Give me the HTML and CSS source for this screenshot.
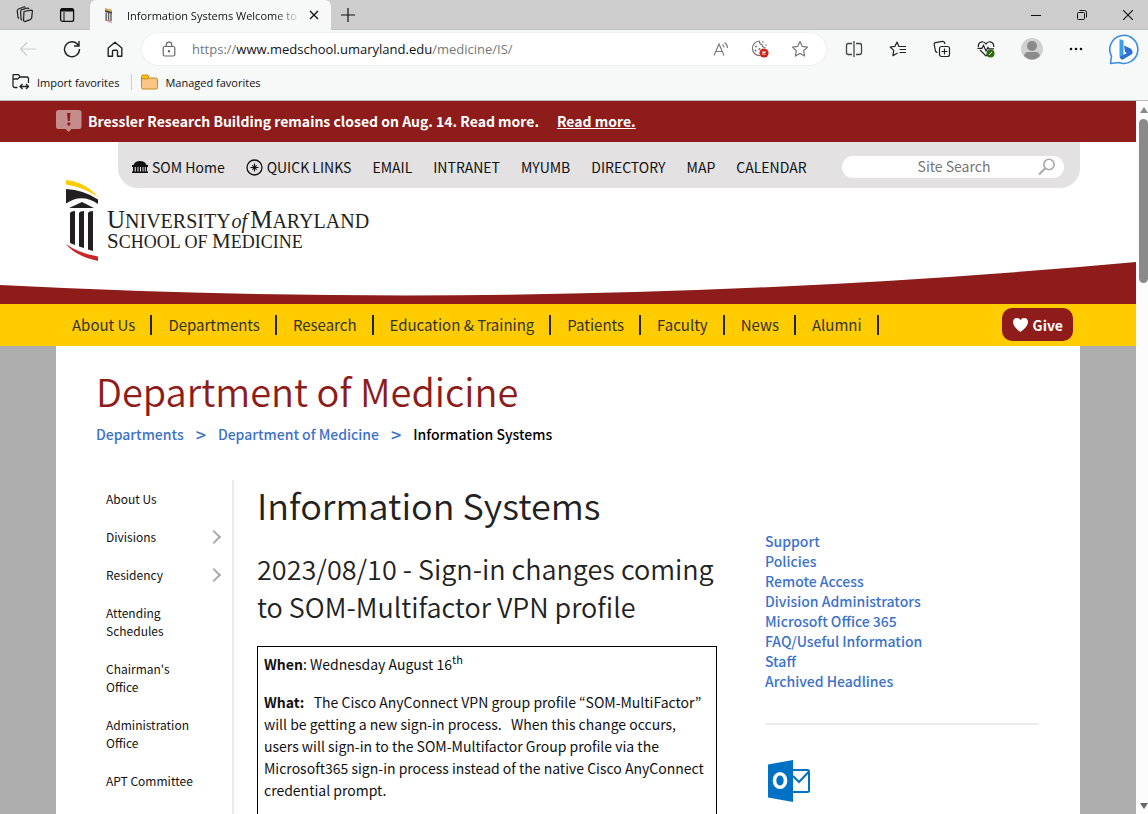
FILE: index.html
```
<!DOCTYPE html>
<html lang="en">
<head>
    <meta charset="UTF-8">
    <meta name="viewport" content="width=device-width, initial-scale=1.0">
    <title>Information Systems Welcome to the Department of Medicine</title>
    <link rel="stylesheet" href="styles.css">
</head>
<body>
    <!-- Browser window -->
    <div class="browser">
        <div class="tab-strip">
            <div class="tab-tools">
                <button class="icon-btn" aria-label="Workspaces">
                    <svg width="18" height="18" viewBox="0 0 18 18" fill="none" stroke="#222" stroke-width="1.2" stroke-linejoin="round"><path d="M8 5.5l7.2-1.3q1.3 0 1.2 1.2l-.8 7-1.3 1.2-5.6 2-1.2-1z"/><path d="M13 3.2L12 2 5.6 3.6 4.6 5l.5 8.4 1 1"/><path d="M9.6 1.5L8.4.8 2.4 3 1.2 4.5l.8 7 1.2 1"/></svg>
                </button>
                <button class="icon-btn" aria-label="Tab actions">
                    <svg width="16" height="16" viewBox="0 0 16 16" fill="none" stroke="#111" stroke-width="1.3"><rect x="1.6" y="1.6" width="13" height="12.8" rx="2"/><path d="M2 3.6h12M2 2.6h12" stroke-width="2"/><path d="M5 5v9" stroke-width="1"/></svg>
                </button>
            </div>
            <div class="tab">
                <svg class="favicon" width="10" height="16" viewBox="0 0 10 16"><path d="M1 1l7 2v2L1 3z" fill="#e0a23c"/><path d="M1 3l7 2v2L1 5z" fill="#444"/><path d="M2.2 6v7M4.6 6v8M7 7v7" stroke="#666" stroke-width="1.5"/><path d="M1 13l7 2.4" stroke="#c77" stroke-width="1"/></svg>
                <span class="tab-title">Information Systems Welcome to</span>
                <button class="icon-btn" aria-label="Close tab">
                    <svg width="10" height="10" viewBox="0 0 10 10" stroke="#111" stroke-width="1.3"><path d="M1 1l8 8M9 1l-8 8"/></svg>
                </button>
            </div>
            <button class="icon-btn new-tab" aria-label="New tab">
                <svg width="14" height="14" viewBox="0 0 14 14" stroke="#111" stroke-width="1.2"><path d="M7 0v14M0 7h14"/></svg>
            </button>
            <div class="window-buttons">
                <button class="icon-btn" aria-label="Minimize"><svg width="10" height="10" viewBox="0 0 10 10" stroke="#111"><path d="M0 5.5h10"/></svg></button>
                <button class="icon-btn" aria-label="Restore"><svg width="10" height="10" viewBox="0 0 10 10" fill="none" stroke="#111"><rect x=".5" y="2.5" width="7" height="7" rx="1"/><path d="M2.5.5h5q2 0 2 2v5"/></svg></button>
                <button class="icon-btn" aria-label="Close"><svg width="10" height="10" viewBox="0 0 10 10" stroke="#111" stroke-width="1.1"><path d="M0 0l10 10M10 0L0 10"/></svg></button>
            </div>
        </div>

        <div class="toolbar">
            <div class="nav-buttons">
                <button class="icon-btn" aria-label="Back"><svg width="18" height="16" viewBox="0 0 18 16" fill="none" stroke="#ccc" stroke-width="1.2"><path d="M17 8H2M8 1.500L1.500 8 8 14.500"/></svg></button>
                <button class="icon-btn" aria-label="Refresh"><svg width="18" height="18" viewBox="0 0 18 18" fill="none" stroke="#222" stroke-width="1.4"><path d="M15.500 5.500A7.500 7.500 0 1 0 16.500 9M16 1v5h-5"/></svg></button>
                <button class="icon-btn" aria-label="Home"><svg width="16" height="17" viewBox="0 0 16 17" fill="none" stroke="#222" stroke-width="1.4" stroke-linejoin="round"><path d="M1.200 7L8 1.200 14.800 7v8.300h-4.300v-5q0-1-1-1h-3q-1 0-1 1v5H1.200z"/></svg></button>
            </div>
            <div class="address">
                <svg width="14" height="16" viewBox="0 0 14 16" fill="none" stroke="#666" stroke-width="1.2"><rect x="1.200" y="5.500" width="11.600" height="9.500" rx="1.500"/><path d="M4.200 5.500V4a2.800 2.800 0 0 1 5.600 0v1.500"/><circle cx="7" cy="10.300" r=".6" fill="#444"/></svg>
                <span class="url">https://<b>www.medschool.umaryland.edu</b>/medicine/IS/</span>
                <button class="icon-btn" aria-label="Read aloud"><svg width="16" height="16" viewBox="0 0 16 16" fill="none" stroke="#777" stroke-width="1.100"><path d="M1 14.500L6 3l5 11.500M2.800 10.500h6.400M9.500 3.500q1.500 1.200 1.500 3M11.500 1.500q3 2 3 5.500"/></svg></button>
                <button class="icon-btn" aria-label="Cookies blocked"><svg width="18" height="18" viewBox="0 0 18 18" fill="none" stroke="#777" stroke-width="1.200"><path d="M8.500 1A7.300 7.300 0 1 0 9 15.700M8.500 1q-.5 3 2.500 3.500 0 3 3.500 3"/><g fill="#777" stroke="none"><circle cx="5" cy="6.500" r="1"/><circle cx="4.500" cy="10.500" r="1"/><circle cx="8.500" cy="9" r="1"/><circle cx="12" cy="2" r=".8"/><circle cx="15" cy="5" r=".8"/></g><circle cx="13" cy="13" r="4.600" fill="#d0221b" stroke="none"/><path d="M11.500 11.500l3 3M14.500 11.500l-3 3" stroke="#fff"/></svg></button>
                <button class="icon-btn" aria-label="Add to favorites"><svg width="18" height="18" viewBox="0 0 18 18" fill="none" stroke="#777" stroke-width="1.200" stroke-linejoin="round"><path d="M9 1.500l2.300 4.900 5.200.7-3.800 3.700.9 5.300L9 13.500l-4.600 2.600.9-5.300-3.800-3.700 5.200-.7z"/></svg></button>
            </div>
            <div class="toolbar-actions">
                <button class="icon-btn" aria-label="Split screen"><svg width="18" height="16" viewBox="0 0 18 16" fill="none" stroke="#444" stroke-width="1.300"><path d="M7 2.500H3.500q-2 0-2 2v7q0 2 2 2H7M11 2.500h3.500q2 0 2 2v7q0 2-2 2H11M9 0v16"/></svg></button>
                <button class="icon-btn" aria-label="Favorites"><svg width="18" height="16" viewBox="0 0 18 16" fill="none" stroke="#222" stroke-width="1.200" stroke-linejoin="round"><path d="M12 5.500l-2.200-.2L8 1 6 5.300l-4.900.7 3.700 3.400-.9 5.300L8.500 12M11 5.500h6M10.500 8.500H17M10.500 11.500H17"/></svg></button>
                <button class="icon-btn" aria-label="Collections"><svg width="18" height="18" viewBox="0 0 18 18" fill="none" stroke="#222" stroke-width="1.200"><rect x="6.500" y="6.500" width="10" height="10" rx="2"/><path d="M11.500 8.500v6M8.500 11.500h6M4.500 12.500q-1.500 0-2-1.500L1.200 4.500Q1 3 2.500 2.700L9.500 1.300q1.500-.2 2 1.200l.4 1.700"/></svg></button>
                <button class="icon-btn" aria-label="Browser essentials"><svg width="18" height="18" viewBox="0 0 18 18" fill="none" stroke="#222" stroke-width="1.200"><path d="M1.300 7Q.8 2.800 4.800 1.800 7.500 1.500 9 4q1.500-2.500 4.200-2.200 4 1 3.500 5.200M3 10l6 6 2-2M.5 8.300H5l1.500-3L9 11l2-3.500.8 1.300H17"/><circle cx="13.500" cy="13.500" r="4" fill="#2c6b12" stroke="none"/><path d="M12 15l3-3" stroke="#fff" stroke-width="1"/></svg></button>
                <button class="icon-btn" aria-label="Profile"><svg width="22" height="22" viewBox="0 0 22 22"><circle cx="11" cy="11" r="11" fill="#d0d0d0"/><circle cx="11" cy="8" r="5" fill="#8a8a8a"/><path d="M3 18q1-4 4-4h8q3 0 4 4-8 7-16 0z" fill="#8a8a8a"/></svg></button>
                <button class="icon-btn" aria-label="Settings and more"><svg width="14" height="4" viewBox="0 0 14 4" fill="#111"><circle cx="2" cy="2" r="1.300"/><circle cx="7" cy="2" r="1.300"/><circle cx="12" cy="2" r="1.300"/></svg></button>
                <button class="icon-btn" aria-label="Bing chat"><svg width="32" height="32" viewBox="0 0 32 32"><path d="M1.500 30.500l1-7.500A14 14 0 1 1 10 29.500z" fill="#fff" stroke="#3a8ee0" stroke-width="1.600" stroke-linejoin="round"/><path d="M10.500 6l4 1.500v13.800l-1.500 4-2.500-1.500z" fill="#36a0ea"/><path d="M15 12.500l7 3.300q2 1.800 1.500 5L14 26.500q-2 .8-3.500-2.500l7.500-4-2-1z" fill="#2c6fd6"/></svg></button>
            </div>
        </div>

        <div class="favorites-bar">
            <button class="fav"><svg width="18" height="16" viewBox="0 0 18 16" fill="none" stroke="#222" stroke-width="1.300"><path d="M5.500 13.500H3q-2 0-2-2v-10q0-1 1-1h4q1 0 2 2.500h7q1.500 0 1.500 1.500V9M1 5h4.500L8 3M8.500 12.500h8M10.500 10l-2.500 2.500 2.500 2.500M14 10l2.500 2.500L14 15"/></svg>Import favorites</button>
            <button class="fav fav-managed"><svg width="17" height="16" viewBox="0 0 17 16" stroke="#c98a1b"><path d="M.5 4h14q2 0 2 2v7.500q0 1.500-1.500 1.500H2Q.5 15 .5 13.500z" fill="#fcc583"/><path d="M.5 4.500v-2Q.5 1 2 1h4q1.500 0 2 2L6 5z" fill="#fbc30c"/></svg>Managed favorites</button>
        </div>
    </div>

    <div class="viewport">
        <div class="page">
            <div class="alert">
                <svg width="26" height="22" viewBox="0 0 26 22"><path d="M2.500 0h20.500q2.500 0 2.500 2.500v14q0 2.500-2.500 2.500h-7.500l-3 3-3-3h-7Q0 19 0 16.500v-14Q0 0 2.500 0z" fill="#c68c8b"/><path d="M11 3h3.500l-.8 8h-1.900z" fill="#8d1c1a"/><circle cx="12.800" cy="14" r="1.700" fill="#8d1c1a"/></svg>
                <span>Bressler Research Building remains closed on Aug. 14. Read more.</span>
                <a href="#">Read more.</a>
            </div>

            <header class="site-header">
                <div class="utility">
                    <a href="#"><svg width="16" height="12" viewBox="0 0 16 12" fill="#111"><path d="M1.500 4Q3 0 8 0t6.500 4z"/><path d="M0 4h16v2H0zM1 6h1.700v5H1zM3.800 6h1.700v5H3.800zM6.500 6H8v5H6.500zM9 6h1.500v5H9zM11.500 6h1.300v5h-1.300zM13.800 6H15v5h-1.200zM0 10.500h16V12H0z"/></svg>SOM Home</a>
                    <a href="#"><svg width="17" height="17" viewBox="0 0 17 17"><circle cx="8.500" cy="8.500" r="7.500" fill="none" stroke="#111" stroke-width="1.300"/><path d="M8.500 3.500l1.100 3.900 3.900 1.100-3.900 1.100-1.100 3.900-1.100-3.900-3.900-1.100 3.900-1.100z" fill="#111"/><path d="M6 6l5 5M11 6l-5 5" stroke="#111" stroke-width=".7"/></svg>QUICK LINKS</a>
                    <a href="#">EMAIL</a>
                    <a href="#">INTRANET</a>
                    <a href="#">MYUMB</a>
                    <a href="#">DIRECTORY</a>
                    <a href="#">MAP</a>
                    <a href="#">CALENDAR</a>
                    <form class="search">
                        <input type="text" aria-label="Site Search" placeholder="Site Search">
                        <button class="icon-btn" aria-label="Search"><svg width="18" height="18" viewBox="0 0 18 18" fill="none" stroke="#aaa" stroke-width="1.600"><circle cx="11" cy="6.500" r="5.200"/><path d="M7.200 10.300L1 16.500" stroke-width="2"/></svg></button>
                    </form>
                </div>
                <a class="logo" href="#">
                    <svg width="34" height="82" viewBox="0 0 34 82"><path d="M1 0Q20 2 33 17 18 7 1 4.500z" fill="#fc0"/><path d="M1 9q18 1 32 10.500V24Q17 13 1 23.500z" fill="#231f20"/><path d="M17 22l12 6H4z" fill="#231f20"/><path d="M5 33q1-2 5-2v34l-5-2zM14 33q1-2 5-2v37l-5-1.500zM23 33q1-2 5-2v40l-5-1.500z" fill="#231f20"/><path d="M1 64q12 9 32 12.500V81Q10 76 1 64z" fill="#c9252b"/></svg>
                    <span class="logo-text">
                        <span class="logo-line1"><b>U</b>niversity<i>of</i><b>M</b>aryland</span>
                        <span class="logo-line2"><b>S</b>chool of <b>M</b>edicine</span>
                    </span>
                </a>
                <svg class="curve" viewBox="0 0 1136 42" preserveAspectRatio="none"><path d="M0 23Q568 52 1136 0V42H0z" fill="#8d1c1a"/></svg>
            </header>

            <nav class="main-nav">
                <a href="#">About Us</a>
                <a href="#">Departments</a>
                <a href="#">Research</a>
                <a href="#">Education &amp; Training</a>
                <a href="#">Patients</a>
                <a href="#">Faculty</a>
                <a href="#">News</a>
                <a href="#">Alumni</a>
                <button class="give"><svg width="15" height="14" viewBox="0 0 15 14" fill="#fff"><path d="M7.500 14Q0 8.500 0 4.300 0 0 4 0q2.500 0 3.500 2Q8.500 0 11 0q4 0 4 4.300Q15 8.500 7.500 14z"/></svg>Give</button>
            </nav>

            <main class="content">
                <h1>Department of Medicine</h1>
                <div class="breadcrumb">
                    <a href="#">Departments</a>
                    <b>&gt;</b>
                    <a href="#">Department of Medicine</a>
                    <b>&gt;</b>
                    <span>Information Systems</span>
                </div>

                <div class="columns">
                    <nav class="side-nav">
                        <a href="#">About Us</a>
                        <a class="has-children" href="#">Divisions</a>
                        <a class="has-children" href="#">Residency</a>
                        <a href="#">Attending Schedules</a>
                        <a href="#">Chairman's Office</a>
                        <a href="#">Administration Office</a>
                        <a href="#">APT Committee</a>
                    </nav>

                    <article class="article">
                        <h2>Information Systems</h2>
                        <h3>2023/08/10 - Sign-in changes coming to SOM-Multifactor VPN profile</h3>
                        <div class="notice">
                            <p><strong>When</strong>: Wednesday August 16<sup>th</sup></p>
                            <p><strong>What:</strong>&nbsp;&nbsp; The Cisco AnyConnect VPN group profile “SOM-MultiFactor” will be getting a new sign-in process.&nbsp;&nbsp; When this change occurs, users will sign-in to the SOM-Multifactor Group profile via the Microsoft365 sign-in process instead of the native Cisco AnyConnect credential prompt.</p>
                        </div>
                    </article>

                    <aside class="links">
                        <a href="#">Support</a>
                        <a href="#">Policies</a>
                        <a href="#">Remote Access</a>
                        <a href="#">Division Administrators</a>
                        <a href="#">Microsoft Office 365</a>
                        <a href="#">FAQ/Useful Information</a>
                        <a href="#">Staff</a>
                        <a href="#">Archived Headlines</a>
                        <hr>
                        <svg width="46" height="42" viewBox="0 0 46 42"><path d="M3 4.500L28 0v42L3 37.500z" fill="#0072c6"/><ellipse cx="15" cy="20.500" rx="5.500" ry="6.800" fill="none" stroke="#fff" stroke-width="3.600"/><path d="M28 10h14.500q1.500 0 1.500 1.500v19q0 1.500-1.500 1.500H28M28 16l6 6 10-10.500" fill="none" stroke="#0072c6" stroke-width="2"/></svg>
                    </aside>
                </div>
            </main>
        </div>
        <div class="scrollbar">
            <i class="arrow-up"></i>
            <i class="thumb"></i>
            <i class="arrow-down"></i>
        </div>
    </div>
</body>
</html>
```

FILE: styles.css
```
* {
    box-sizing: border-box;
}

body {
    display: flex;
    flex-direction: column;
    height: 100vh;
    margin: 0;
    overflow: hidden;
    background: #fff;
    color: #111;
    font-family: "Noto Sans CJK KR", "Open Sans", sans-serif;
    font-size: 14px;
}

a {
    color: inherit;
    text-decoration: none;
}

button {
    border: none;
    background: none;
    padding: 0;
    font: inherit;
    color: inherit;
    cursor: pointer;
}

svg {
    display: block;
    flex: none;
}

.icon-btn {
    display: flex;
    align-items: center;
    justify-content: center;
    flex: none;
}

/* Browser window */
.browser {
    flex: none;
    font-family: "Open Sans", sans-serif;
    font-size: 11px;
    background: #f7f8f8;
    border-bottom: 1px solid #bbb;
}

.tab-strip {
    display: flex;
    height: 30px;
    background: #cdcdcd;
    border-bottom: 1px solid #c2c2c2;
}

.tab-tools {
    display: flex;
    align-items: center;
    gap: 25px;
    width: 90px;
    padding-left: 16px;
}

.tab {
    display: flex;
    align-items: center;
    width: 241px;
    height: 30px;
    padding: 0 12px 0 14px;
    background: #f7f8f8;
    border-radius: 6px 6px 0 0;
}

.tab-title {
    flex: 1;
    margin: 0 8px 0 13px;
    white-space: nowrap;
    -webkit-mask-image: linear-gradient(to right, #000 85%, transparent);
    mask-image: linear-gradient(to right, #000 85%, transparent);
}

.new-tab {
    margin-left: 10px;
}

.window-buttons {
    display: flex;
    gap: 36px;
    margin-left: auto;
    padding-right: 15px;
}

.toolbar {
    display: flex;
    align-items: center;
    height: 38px;
    padding: 0 7px 0 19px;
}

.nav-buttons {
    display: flex;
    align-items: center;
    gap: 26px;
}

.address {
    display: flex;
    align-items: center;
    flex: 1;
    gap: 22px;
    height: 32px;
    margin: 0 19px;
    padding: 0 17px 0 20px;
    background: #fff;
    border-radius: 16px;
    box-shadow: 0 0 2px #ddd;
}

.url {
    flex: 1;
    color: #777;
    font-size: 13px;
    margin-left: -6px;
}

.url b {
    font-weight: 400;
    color: #111;
}

.toolbar-actions {
    display: flex;
    align-items: center;
    gap: 26px;
}

.favorites-bar {
    display: flex;
    align-items: center;
    height: 32px;
    padding: 0 12px 4px;
    gap: 12px;
}

.fav {
    display: flex;
    align-items: center;
    gap: 7px;
}

.fav-managed {
    border-left: 1px solid #ccc;
    padding-left: 9px;
}

/* Page area */
.viewport {
    display: flex;
    flex: 1;
    min-height: 0;
}

.page {
    display: flex;
    flex-direction: column;
    flex: 1;
    overflow: hidden;
    background: #aeaeae;
}

.alert {
    display: flex;
    align-items: center;
    flex: none;
    height: 41px;
    padding: 0 56px 2px;
    background: #8d1c1a;
    color: #fff;
    font-weight: 700;
}

.alert span {
    margin: 0 18px 0 6px;
}

.alert a {
    text-decoration: underline;
}

.site-header {
    position: relative;
    flex: none;
    height: 162px;
    padding: 0 56px;
    background: #fff;
}

.utility {
    display: flex;
    align-items: center;
    height: 46px;
    margin-left: 62px;
    padding: 4px 16px 0 14px;
    gap: 21px;
    background: #e3e1e2;
    border-radius: 0 0 20px 20px;
}

.utility a {
    display: flex;
    align-items: center;
    gap: 4px;
    white-space: nowrap;
}

.search {
    display: flex;
    align-items: center;
    width: 222px;
    height: 22px;
    margin: 0 0 0 auto;
    padding-right: 8px;
    background: #fff;
    border-radius: 11px;
}

.search input {
    flex: 1;
    min-width: 0;
    height: 22px;
    padding: 0 0 2px 28px;
    border: none;
    background: none;
    font: inherit;
    text-align: center;
}

.search input::placeholder {
    color: #757575;
}

.logo {
    display: flex;
    width: 330px;
    margin: -8px 0 0 9px;
    color: #231f20;
    font-family: "Liberation Serif", serif;
}

.logo-text {
    display: flex;
    flex-direction: column;
    padding: 30px 0 0 8px;
    text-transform: uppercase;
    white-space: nowrap;
}

.logo-text b {
    font-weight: 400;
}

.logo-line1 {
    font-size: 20px;
    line-height: 20px;
}

.logo-line1 b {
    font-size: 25px;
}

.logo-line1 i {
    padding: 0 3px 0 1px;
    text-transform: none;
}

.logo-line2 {
    font-size: 18px;
    line-height: 20px;
}

.logo-line2 b {
    font-size: 21px;
}

/* Red swoosh along the bottom of the header */
.curve {
    position: absolute;
    left: 0;
    bottom: 0;
    width: 100%;
    height: 42px;
}

.main-nav {
    display: flex;
    align-items: center;
    flex: none;
    height: 42px;
    padding: 0 63px 0 56px;
    background: #fc0;
    color: #333;
    font-size: 15px;
}

.main-nav a {
    height: 20px;
    padding: 0 15px 0 16px;
    line-height: 20px;
    border-right: 2px solid #222;
    white-space: nowrap;
}

.give {
    display: flex;
    align-items: center;
    gap: 5px;
    height: 33px;
    margin: -1px 0 0 auto;
    padding: 0 10px 0 11px;
    background: #8d1c1a;
    border-radius: 10px;
    color: #fff;
    font-size: 14px;
    font-weight: 700;
}

.content {
    flex: 1;
    min-height: 0;
    margin: 0 56px;
    padding: 22px 41px 0 40px;
    background: #fff;
}

h1,
h2,
h3 {
    margin: 0;
    font-weight: 350;
}

h1 {
    color: #8d1c1a;
    font-size: 38px;
    line-height: 46px;
}

.breadcrumb {
    display: flex;
    gap: 12px;
    margin-top: 10px;
    line-height: 20px;
    font-weight: 500;
    color: #000;
}

.breadcrumb a,
.breadcrumb b,
.links a {
    color: #3c72c9;
}

.breadcrumb b {
    font-size: 18px;
    font-weight: 500;
}

.columns {
    display: grid;
    grid-template-columns: 138px 1fr 274px;
    margin-top: 36px;
}

.side-nav {
    display: flex;
    flex-direction: column;
    min-height: 400px;
    border-right: 2px solid #ebebeb;
    font-size: 12px;
    line-height: 18px;
}

.side-nav a {
    padding: 10px 30px 10px 10px;
}

.side-nav .has-children {
    display: flex;
    align-items: center;
    justify-content: space-between;
    padding-right: 13px;
}

.has-children::after {
    content: "";
    width: 8px;
    height: 8px;
    border: solid #aaa;
    border-width: 2px 2px 0 0;
    transform: rotate(45deg);
}

.article {
    padding: 1px 48px 0 23px;
}

h2 {
    color: #222;
    font-size: 36px;
    line-height: 46px;
}

h3 {
    margin: 23px 0 20px;
    color: #222;
    font-size: 27px;
    line-height: 38px;
}

.notice {
    min-height: 300px;
    padding: 6px;
    border: 1px solid #000;
    line-height: 22px;
}

.notice p {
    margin: 0 0 16px;
}

.notice sup {
    font-size: 11px;
    line-height: 0;
}

.links {
    display: flex;
    flex-direction: column;
    padding-top: 51px;
    line-height: 20px;
    font-weight: 500;
}

.links hr {
    width: 100%;
    height: 2px;
    margin: 32px 0 35px;
    border: none;
    background: #ebebeb;
}

.scrollbar {
    display: flex;
    flex-direction: column;
    align-items: center;
    flex: none;
    width: 12px;
    padding: 6px 0 5px 3px;
    background: #fcfcfc;
}

.arrow-up,
.arrow-down {
    border: 4px solid transparent;
}

.arrow-up {
    border-top: none;
    border-bottom: 6px solid #888;
}

.arrow-down {
    margin-top: auto;
    border-bottom: none;
    border-top: 6px solid #666;
}

.thumb {
    width: 9px;
    height: 164px;
    margin-top: 6px;
    background: #8a8a8a;
    border-radius: 5px;
}
```
